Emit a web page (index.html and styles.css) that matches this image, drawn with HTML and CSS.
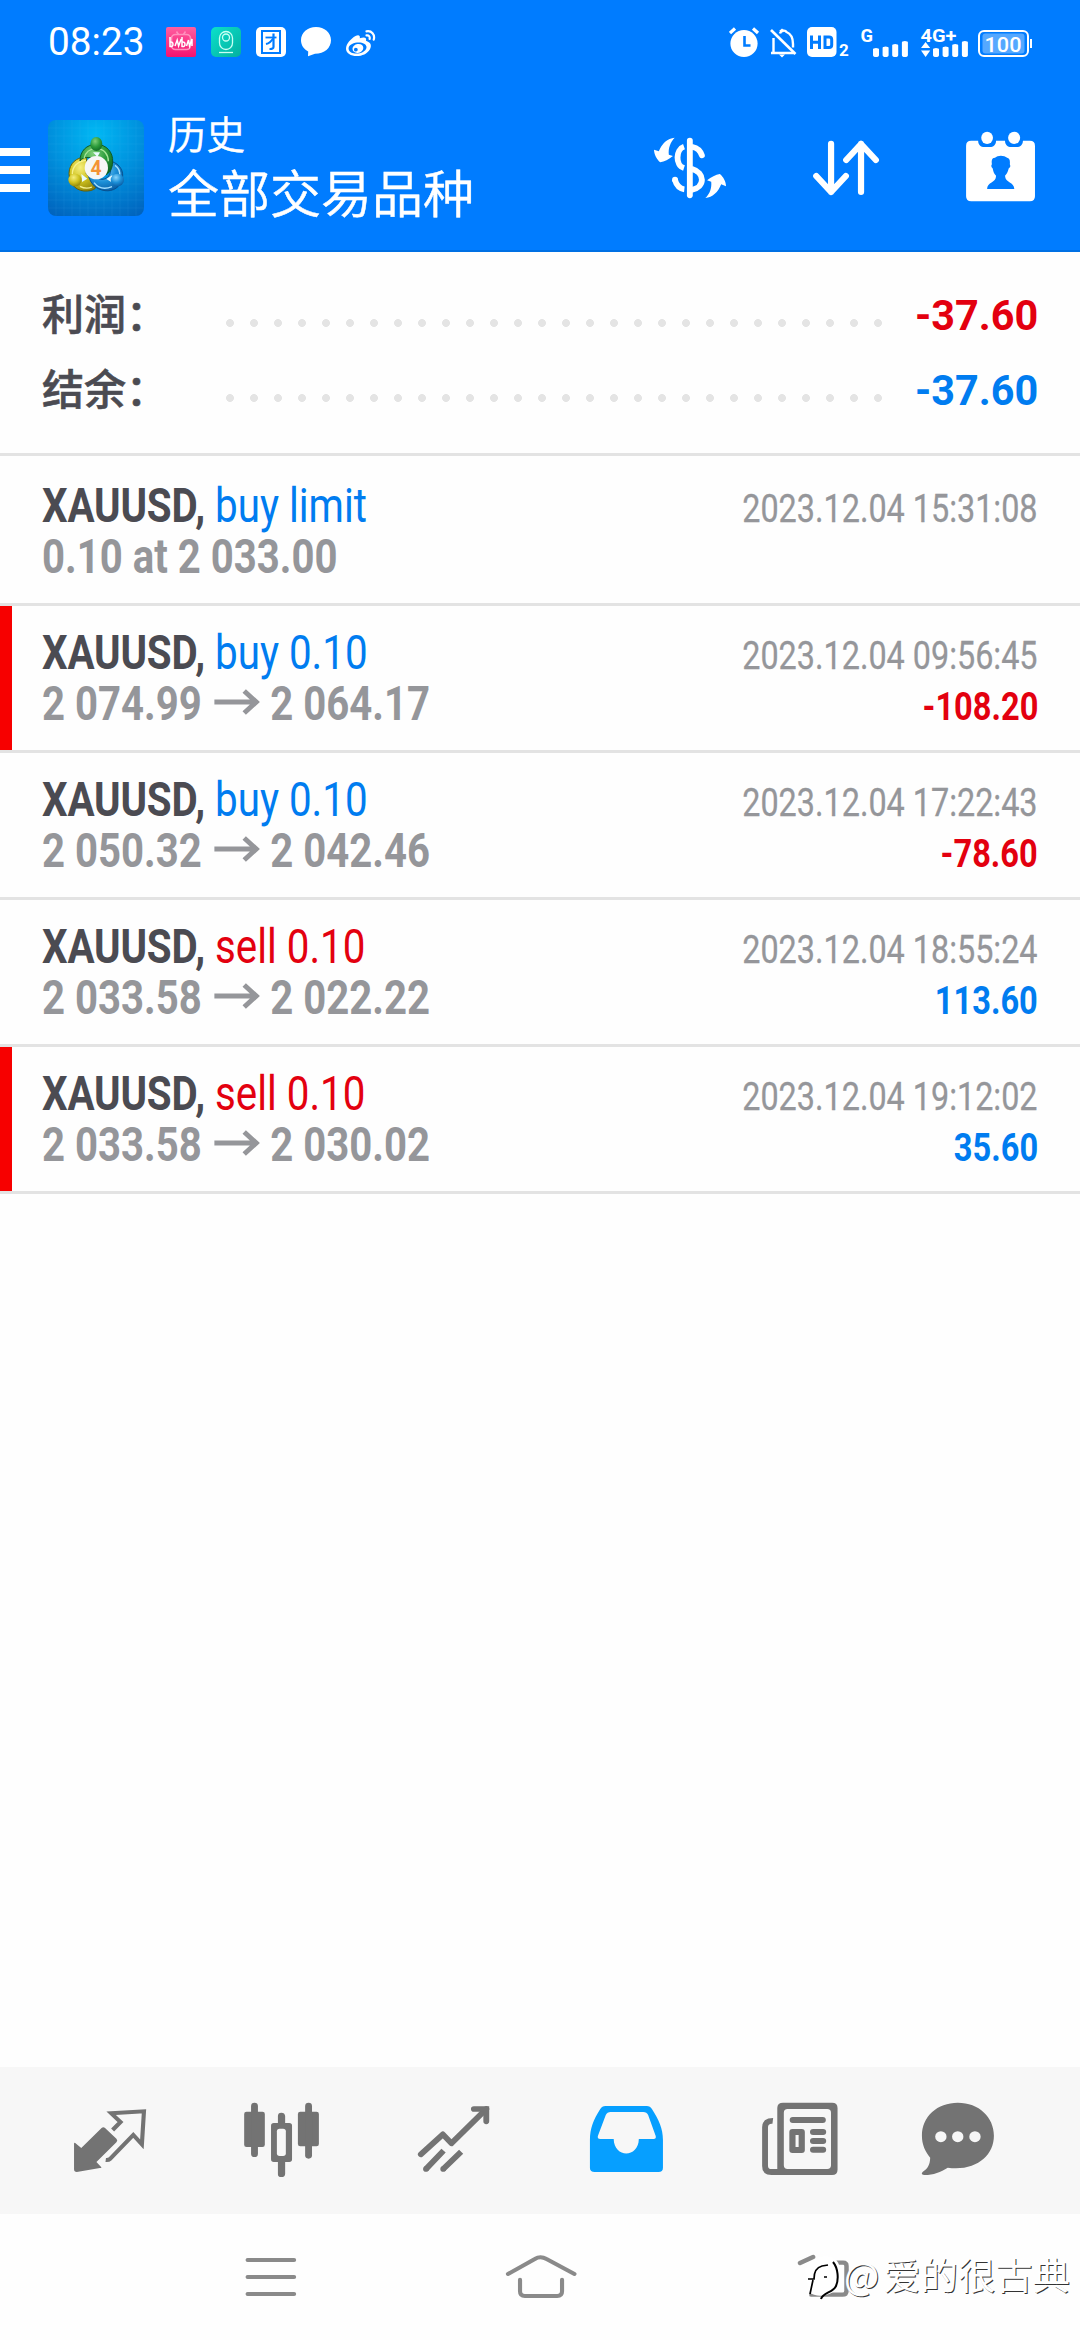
FILE: index.html
```html
<!DOCTYPE html>
<html lang="zh-CN">
<head>
<meta charset="utf-8">
<title>历史</title>
<link rel="stylesheet" href="styles.css">
</head>
<body>
<div class="screen">
  <header class="header">
    <div class="status">
      <div class="clock"><span>08:23</span></div>
      <div class="status-left">
        <svg width="30" height="30" viewBox="0 0 30 30"><defs><linearGradient id="pink" x1="0" y1="0" x2="0" y2="1"><stop offset="0" stop-color="#ff5fa0"/><stop offset="1" stop-color="#f5116f"/></linearGradient></defs><rect width="30" height="30" rx="2" fill="url(#pink)"/><g fill="none" stroke="#ff8fbd" stroke-width="1.600"><rect x="5.500" y="7.500" width="19" height="15" rx="4"/><path d="M10.500 4.500l2 3M19.500 4.500l-2 3"/></g><path d="M4 10v9.500q3 .6 3-2.200T4 15M9 19l2.200-6 1.400 6 2.600-7M16 10v9.500q3 .6 3-2.200T16 15M20.500 19l2-6 1 6 2.500-7v7" fill="none" stroke="#fff" stroke-width="1.500"/></svg>
        <svg width="30" height="30" viewBox="0 0 30 30"><defs><linearGradient id="teal" x1="0" y1="0" x2="1" y2="1"><stop offset="0" stop-color="#0be0cb"/><stop offset="1" stop-color="#04b09f"/></linearGradient></defs><rect width="30" height="30" rx="5" fill="url(#teal)"/><g fill="none" stroke="#c9fff4" stroke-width="1.300"><rect x="8.500" y="4.500" width="13" height="18" rx="6.500"/><circle cx="15" cy="10.500" r="3.500"/><path d="M8 25.500h14"/></g></svg>
        <svg width="30" height="30" viewBox="0 0 30 30"><rect width="30" height="30" rx="5" fill="#fff"/><g fill="none" stroke="#007cff"><rect x="6" y="4" width="18" height="22" stroke-width="2"/><path d="M9.500 10.500h11" stroke-width="1.800"/><path d="M17.500 6.500V20q0 2.200-4 2" stroke-width="2.200"/><path d="M17 11.500q-2.500 4.500-7 5.500" stroke-width="1.800"/></g></svg>
        <svg width="30" height="30" viewBox="0 0 30 30"><path d="M15 0C6.500 0 0 5.700 0 13.300c0 5 3 9 7.200 11.300L7 29.300l7-2.500C23.500 26.800 30 21 30 13.300S23.500 0 15 0z" fill="#fff"/></svg>
        <svg width="30" height="30" viewBox="0 0 30 30"><path fill="#fff" fill-rule="evenodd" d="M9.500 9c2.600-1.400 5-1 4.300 2.300 4-1.500 7.200-1.300 6.200 2.400 4.500 1.500 6.300 4.500 3.800 8.700-2.600 4.200-7.600 6.600-13 6.600C4.800 29 0 26.200 0 21.700 0 17 4.900 11.500 9.500 9zM11 15.500c-5 .5-8.700 3.200-8.400 6.400.4 3.200 4.600 5.100 9.500 4.600 5-.5 8.700-3.500 8.400-6.700-.3-3-4.600-4.900-9.500-4.300z"/><path fill="#fff" fill-rule="evenodd" d="M11.500 17c3.300-.5 5.800 1 5.800 3.700s-2.500 5-5.500 5.200c-3 .2-5.300-1.400-5.300-3.800 0-2.500 2.200-4.700 5-5.100zM9.800 20.700a1.900 1.900 0 1 0 .1 3.800 1.900 1.900 0 0 0-.1-3.800z"/><path d="M20.500 4.300c5-1 8.800 3.200 7.200 8.400M20.500 8.400c2.200-.4 3.700 1.200 3.100 3.500" fill="none" stroke="#fff" stroke-width="2.200" stroke-linecap="round"/></svg>
      </div>
      <div class="status-right">
        <svg width="310" height="36" viewBox="729 24 310 36">
          <g fill="#fff">
            <circle cx="744" cy="43.500" r="13.600"/>
            <path d="M730 33l5-4.500M758 33l-5-4.500" stroke="#fff" stroke-width="3.200"/>
            <path d="M744.500 36v9.500h6" fill="none" stroke="#007cff" stroke-width="2.600"/>
            <path d="M773.500 38v14M771 53h23M780 33.500c1-3.500 5.500-3.500 6.500-1.500 5 2 6.500 6 6.500 12v3.500" fill="none" stroke="#fff" stroke-width="2.400"/>
            <path d="M771 30l24.500 24" stroke="#fff" stroke-width="2.600"/>
            <path d="M779 31l3-2.500 3 2.500zM779 54.500h6l-3 3z"/>
            <rect x="807" y="27" width="29.500" height="30" rx="5"/>
            <path d="M811.500 35.500v13.500M819.500 35.500v13.500M812 42.300h7M825 37v10.500h4q2.700 0 2.700-2.500v-5.500q0-2.500-2.700-2.500z" fill="none" stroke="#007cff" stroke-width="3"/>
            <path d="M873 49.500q0-1.500 3-1.500t3 1.500V55q0 2-3 2t-3-2zM882.600 48q0-1.500 3-1.500t3 1.500v7q0 2-3 2t-3-2zM892.200 45.500q0-1.500 3-1.500t3 1.500V55q0 2-3 2t-3-2zM901.900 42.500q0-1.500 3-1.500t3 1.500V55q0 2-3 2t-3-2z"/>
            <path d="M933 49.500q0-1.500 3-1.500t3 1.500V55q0 2-3 2t-3-2zM942.600 48q0-1.500 3-1.500t3 1.500v7q0 2-3 2t-3-2zM952.200 45.500q0-1.500 3-1.500t3 1.500V55q0 2-3 2t-3-2zM961.900 42.500q0-1.500 3-1.500t3 1.500V55q0 2-3 2t-3-2z"/>
            <path d="M921 48l4.600-6 4.600 6zM921 50.500h9.200l-4.600 6.500z"/>
            <rect x="979" y="31" width="49" height="25" rx="5" fill="none" stroke="#fff" stroke-width="2"/>
            <rect x="982.500" y="33.500" width="42" height="20" rx="3" fill="#55a8ff"/>
            <rect x="1030" y="39" width="2" height="9"/>
            <text class="st" x="839" y="56" font-size="17">2</text>
            <text class="st" x="860.500" y="41.500" font-size="19" textLength="12.500" lengthAdjust="spacingAndGlyphs">G</text>
            <text class="st" x="920.500" y="41.500" font-size="19" textLength="36" lengthAdjust="spacingAndGlyphs">4G+</text>
            <text class="st thin" x="984.500" y="51.500" font-size="21" textLength="37" lengthAdjust="spacingAndGlyphs">100</text>
          </g>
        </svg>
      </div>
    </div>
    <div class="appbar">
      <div class="burger"><i></i><i></i><i></i></div>
      <svg class="logo" viewBox="54 60 288 288">
        <defs>
          <radialGradient id="sky" cx=".5" cy=".15" r=".95"><stop offset="0" stop-color="#00b8f4"/><stop offset=".5" stop-color="#0090dd"/><stop offset="1" stop-color="#0063bd"/></radialGradient>
          <radialGradient id="gr" cx=".4" cy=".3" r=".8"><stop offset="0" stop-color="#7fd07b"/><stop offset=".5" stop-color="#2c9c3c"/><stop offset="1" stop-color="#0b6020"/></radialGradient>
          <radialGradient id="ye" cx=".4" cy=".3" r=".8"><stop offset="0" stop-color="#f5ee7c"/><stop offset=".5" stop-color="#cfc21f"/><stop offset="1" stop-color="#847a08"/></radialGradient>
          <radialGradient id="bl" cx=".4" cy=".3" r=".8"><stop offset="0" stop-color="#8ad4fb"/><stop offset=".5" stop-color="#1c90d8"/><stop offset="1" stop-color="#07539a"/></radialGradient>
        </defs>
        <rect x="54" y="60" width="288" height="288" rx="24" fill="url(#sky)"/>
        <path d="M78 60v288M102 60v288M126 60v288M150 60v288M174 60v288M198 60v288M222 60v288M246 60v288M270 60v288M294 60v288M318 60v288M54 84h288M54 108h288M54 132h288M54 156h288M54 180h288M54 204h288M54 228h288M54 252h288M54 276h288M54 300h288M54 324h288" stroke="#5fd0ff" stroke-opacity=".13" stroke-width="2"/>
        <path d="M170 172c-30-2-52 18-53 48 0 35 25 56 56 53 14-1 23-6 28-14l-32-38z" fill="url(#ye)" stroke="#675f05" stroke-width="3"/>
        <path d="M168 181c-24 2-41 18-41 42M150 259q18 10 36 2" fill="none" stroke="#f6f191" stroke-width="4"/>
        <path d="M244 184c26 8 38 30 33 52-6 26-28 39-52 36-26-4-41-18-49-42l40 8c18 0 28-16 26-34z" fill="url(#bl)" stroke="#07508e" stroke-width="3"/>
        <path d="M255 196c12 8 16 20 14 34M192 248c14 18 34 20 54 12" fill="none" stroke="#a5e0ff" stroke-width="4"/>
        <path d="M150 183c0-30 20-50 49-50 30 0 51 24 49 53-1 20-8 32-20 38l-30-42c-10-12-32-12-44-4z" fill="url(#gr)" stroke="#0d5b2a" stroke-width="3"/>
        <path d="M162 176c4-18 15-30 37-30 24 0 36 18 36 38" fill="none" stroke="#a7e59a" stroke-width="4"/>
        <path d="M189 157h21l-8 14zM154 222l18 14-16 10zM229 237l18-12-2 22z" fill="#e9fbff"/>
        <ellipse cx="199" cy="132" rx="18" ry="21" fill="url(#gr)"/>
        <ellipse cx="135" cy="240" rx="20" ry="19" fill="url(#ye)"/>
        <ellipse cx="262" cy="240" rx="20" ry="19" fill="url(#bl)"/>
        <circle cx="199" cy="203" r="35" fill="#f6f6f6"/>
        <text class="logo-no" x="198" y="224" text-anchor="middle">4</text>
      </svg>
      <div class="titles">
        <div class="t1">历史</div>
        <div class="t2">全部交易品种</div>
      </div>
      <div class="actions">
        <svg viewBox="209 252 450 504" preserveAspectRatio="none">
          <g fill="none" stroke="#fff" stroke-width="17">
            <path d="M418 440c-24 8-26 56 0 64M391 538q8 28 28 30"/>
            <path d="M443 441q20 4 27 25" stroke-linecap="round"/>
            <path d="M440 506c40 12 40 56 0 64"/>
            <path d="M435 422v164" stroke-linecap="round"/>
          </g>
          <circle cx="392" cy="539" r="8.500" fill="#fff"/>
          <path fill="#fff" d="M391 413C370 415 354 430 345 454L331 449C331 463 339 478 349 487C361 485 374 478 386 468L374 464C372 445 378 427 391 413zM480 594C501 592 517 577 526 553L540 559C540 545 532 530 522 522C510 524 497 531 485 541L497 545C499 564 493 581 480 594z"/>
        </svg>
        <svg viewBox="659 252 450 504" preserveAspectRatio="none"><path d="M845 431v145M802 528l43 48 43-48M932 576V431M889 480l43-48 43 48" fill="none" stroke="#fff" stroke-width="18" stroke-linecap="round" stroke-linejoin="round"/></svg>
        <svg viewBox="1109 252 450 504" preserveAspectRatio="none"><path fill="#fff" fill-rule="evenodd" d="M1252 422h20c0 12 8 19 18 19h16c10 0 18-7 18-19h26c0 12 8 19 18 19h16c10 0 18-7 18-19h20q15 0 15 15v152q0 15-15 15h-170q-15 0-15-15V437q0-15 15-15zM1298 567h79c0-22-26-18-27-40 8-7 8-14 11-22 5-3 5-8 3-12 1-14-1-18-8-20-8-8-28-8-35 0-9 0-11 8-9 20-3 4-2 9 2 12 2 8 3 16 10 22 0 22-26 18-26 40z"/><ellipse cx="1298" cy="413.500" rx="17" ry="18.500" fill="#fff"/><ellipse cx="1376.500" cy="413.500" rx="17.500" ry="18.500" fill="#fff"/></svg>
      </div>
    </div>
  </header>

  <section class="summary">
    <div class="sum-row"><span class="label">利润：</span><i class="dots"></i><span class="value red">-37.60</span></div>
    <div class="sum-row"><span class="label">结余：</span><i class="dots"></i><span class="value blue">-37.60</span></div>
  </section>

  <main class="list">
    <article class="deal first">
      <div class="line"><span class="name"><b>XAUUSD,</b> <span class="blue">buy limit</span></span><span class="date">2023.12.04 15:31:08</span></div>
      <div class="line"><span class="price">0.10 at 2 033.00</span></div>
    </article>
    <article class="deal mark">
      <div class="line"><span class="name"><b>XAUUSD,</b> <span class="blue">buy 0.10</span></span><span class="date">2023.12.04 09:56:45</span></div>
      <div class="line"><span class="price">2 074.99<svg class="arrow" viewBox="0 0 46 26" preserveAspectRatio="none"><path d="M0 13h41M30 2l12 11-12 11"/></svg>2 064.17</span><span class="profit red">-108.20</span></div>
    </article>
    <article class="deal">
      <div class="line"><span class="name"><b>XAUUSD,</b> <span class="blue">buy 0.10</span></span><span class="date">2023.12.04 17:22:43</span></div>
      <div class="line"><span class="price">2 050.32<svg class="arrow" viewBox="0 0 46 26" preserveAspectRatio="none"><path d="M0 13h41M30 2l12 11-12 11"/></svg>2 042.46</span><span class="profit red">-78.60</span></div>
    </article>
    <article class="deal">
      <div class="line"><span class="name"><b>XAUUSD,</b> <span class="red">sell 0.10</span></span><span class="date">2023.12.04 18:55:24</span></div>
      <div class="line"><span class="price">2 033.58<svg class="arrow" viewBox="0 0 46 26" preserveAspectRatio="none"><path d="M0 13h41M30 2l12 11-12 11"/></svg>2 022.22</span><span class="profit blue">113.60</span></div>
    </article>
    <article class="deal mark">
      <div class="line"><span class="name"><b>XAUUSD,</b> <span class="red">sell 0.10</span></span><span class="date">2023.12.04 19:12:02</span></div>
      <div class="line"><span class="price">2 033.58<svg class="arrow" viewBox="0 0 46 26" preserveAspectRatio="none"><path d="M0 13h41M30 2l12 11-12 11"/></svg>2 030.02</span><span class="profit blue">35.60</span></div>
    </article>
  </main>

  <nav class="tabs">
    <svg viewBox="0 51 522.670 441" preserveAspectRatio="none"><path d="M215 281q0-5 6 0l15 13 59-60q5-5 10 0l33 32q5 5 0 11l-58 59 13 14q4 4-3 4l-67 12q-8 0-8-8z" fill="#737373"/><path d="M327 240l23-24-27-26 95-6-6 99-25-28-68 72q-4 4-12 3" fill="none" stroke="#737373" stroke-width="12"/></svg>
    <svg viewBox="522.670 51 522.670 441" preserveAspectRatio="none"><g fill="#737373"><rect x="709" y="185" width="60" height="106" rx="7"/><rect x="729" y="158" width="20" height="163" rx="10"/><rect x="865" y="185" width="61" height="104" rx="7"/><rect x="886" y="158" width="20" height="168" rx="10"/><path d="M807 219v-21q0-10 10-10t11 10v21h12q8 0 8 8v101q0 8-8 8h-12v35q0 10-11 10t-10-10v-35h-12q-8 0-8-8V227q0-8 8-8z"/></g><rect x="804" y="236" width="26" height="82" rx="8" fill="#f7f7f7"/></svg>
    <svg viewBox="1045.330 51 522.670 441" preserveAspectRatio="none"><g fill="none" stroke="#737373" stroke-width="17"><path d="M1222 313l64-60 25 27 101-103" stroke-linecap="round" stroke-linejoin="round"/><path d="M1376 177h36v37" stroke-width="17" stroke-linecap="round"/><path d="M1288 302l-51 55M1339 305l-52 52"/></g><g fill="#737373"><circle cx="1237" cy="357" r="8.500"/><circle cx="1287" cy="357" r="8.500"/></g></svg>
    <svg viewBox="0 51 522.670 441" preserveAspectRatio="none"><path fill="#069fff" fill-rule="evenodd" d="M190 168h120q10 0 15 9c20 32 32 60 32 92v84q0 13-13 13H159q-14 0-14-13v-84c0-32 10-60 30-92q5-9 15-9zM205 186q-10 0-14 9l-23 63q-2 9 7 9h39c1 58 72 58 73 0h43q8 0 6-9l-22-63q-4-9-14-9z"/></svg>
    <svg viewBox="522.670 51 522.670 441" preserveAspectRatio="none"><path fill="#737373" fill-rule="evenodd" d="M706 158h142q16 0 16 16v185q0 16-16 16H672q-27 0-27-27V232q0-28 32-28l-2 17q-13-1-13 11v115q0 10 10 10h17V174q0-16 17-16zM719 177q-11 0-11 11v158q0 11 11 11h115q11 0 11-11V188q0-11-11-11z"/><g fill="none" stroke="#737373" stroke-width="18" stroke-linecap="round" stroke-linejoin="round"><path d="M734 210h87M793 246h29M793 273h29M793 299h29"/><path d="M733 246h27v54h-27z"/></g></svg>
    <svg viewBox="1045.330 51 522.670 441" preserveAspectRatio="none"><path fill="#737373" d="M1213 158c62 0 105 44 105 99 0 60-52 107-134 96-20 13-42 22-67 22q-13-1-6-9c16-12 21-22 22-43-15-19-24-40-24-66 0-58 45-99 104-99z"/><g fill="#f7f7f7"><circle cx="1164" cy="260" r="16.500"/><circle cx="1213" cy="260" r="16.500"/><circle cx="1263" cy="260" r="16.500"/></g></svg>
  </nav>

  <div class="sysnav">
    <svg viewBox="0 492 1045.330 378" preserveAspectRatio="none"><path d="M719 630h135M719 681h135M719 732h135"/></svg>
    <svg viewBox="1045.330 492 1045.330 378" preserveAspectRatio="none"><path d="M1475 672l78-45q16-11 34 0l81 45M1510 689v35q0 14 14 14h94q14 0 14-14v-35"/></svg>
    <svg viewBox="522.670 492 1045.330 378" preserveAspectRatio="none"><path d="M755 639l38-18M845 638h35q10 0 10 10v74q0 12-12 12h-90" stroke-width="13"/></svg>
  </div>

  <div class="watermark">
    <svg width="42" height="52" viewBox="0 0 42 52"><path d="M3 18C10 6 24 2 33 8c8 6 6 24-2 33-8 5-18 5-24 0z" fill="#fff"/><path d="M31 11c5 6 6 17 3 24-3 7-13 6-15 13" fill="none" stroke="#000" stroke-width="2"/><path d="M6 28h6q0-11 8-13l6-1M11 29l-3 14M22 26h3" fill="none" stroke="#000" stroke-width="1.700"/></svg><span class="at">@</span><span>爱的很古典</span>
  </div>
</div>
</body>
</html>
```
FILE: styles.css
```css
* { box-sizing: border-box; }
body { margin: 0; background: #fefefe; font-family: Roboto, "Noto Sans CJK SC", sans-serif; }
.screen { position: relative; width: 1080px; height: 2340px; display: flex; flex-direction: column; background: #fefefe; overflow: hidden; }
svg { display: block; flex: none; }
.red { color: #e3000f; }
.blue { color: #007cf0; }

.header { height: 252px; background: #007cff; border-bottom: 2px solid #0070e4; color: #fff; }
.status { height: 84px; display: flex; align-items: center; }
.clock { width: 118px; margin-left: 48px; font-size: 39.500px; line-height: 84px; }
.clock span { display: inline-block; transform: scaleX(.98); transform-origin: left; }
.status-left { display: flex; gap: 15px; }
.status-right { margin-left: auto; margin-right: 41px; }
.st { font-family: Roboto, sans-serif; font-weight: 700; }
.st.thin { font-weight: 500; }

.appbar { height: 168px; display: flex; align-items: flex-start; }
.burger { width: 30px; margin-top: 64px; display: flex; flex-direction: column; gap: 10px; }
.burger i { height: 8px; background: #fff; }
.logo { width: 96px; height: 96px; margin: 36px 0 0 18px; }
.logo-no { font: 700 58px Roboto, sans-serif; fill: #f49335; }
.titles { margin: 19px 0 0 24px; font-weight: 350; font-family: "Noto Sans CJK SC", sans-serif; white-space: nowrap; -webkit-text-stroke: .5px #fff; }
.titles div { line-height: 59px; }
.t1 { font-size: 38.500px; }
.t2 { font-size: 51px; }
.actions { display: flex; margin-left: auto; margin-right: 3px; }
.actions svg { width: 155px; height: 168px; }

.summary { height: 204px; padding: 26px 42px 0; border-bottom: 3px solid #e3e3e3; }
.sum-row { height: 75px; display: flex; align-items: baseline; }
.label { width: 176px; font: 500 42px/60px "Noto Sans CJK SC", sans-serif; color: #4b4b52; -webkit-text-stroke: .6px #4b4b52; }
.dots { width: 672px; height: 8px; align-self: flex-start; margin-top: 41px; background: radial-gradient(circle at center, #e4e4e4 3.600px, transparent 4.300px) 0 0 / 24px 8px repeat-x; }
.value { margin-left: auto; font-weight: 700; font-size: 42px; line-height: 75px; transform: scaleX(.985); transform-origin: right; }

.list { flex: 1; }
.deal { height: 147px; padding: 21px 42px 0; border-bottom: 3px solid #e3e3e3; }
.deal.first { height: 150px; padding-top: 24px; }
.deal.mark { background: linear-gradient(#f70000, #f70000) 0 0 / 12px 100% no-repeat; background-clip: padding-box; }
.line { height: 51px; display: flex; justify-content: space-between; align-items: baseline; line-height: 51px; white-space: nowrap; }
.name, .price { font-size: 48px; transform: scaleX(.84); transform-origin: left; }
.name b { color: #4b4b52; letter-spacing: -.2px; }
.price { font-weight: 700; color: #95969a; transform: scaleX(.836); }
.date, .profit { font-size: 39.500px; transform: scaleX(.825); transform-origin: right; }
.date { color: #95969a; transform: scaleX(.819); -webkit-text-stroke: .3px #95969a; }
.profit { font-weight: 700; }
.arrow { display: inline-block; width: 55px; height: 26px; margin: 0 12px 0 15px; vertical-align: 5px; fill: none; stroke: #95969a; stroke-width: 5; }

.tabs { height: 147px; display: flex; background: #f7f7f7; }
.tabs svg { width: 180px; height: 147px; }
.sysnav { height: 126px; display: flex; }
.sysnav svg { width: 360px; height: 126px; fill: none; stroke: #8a8a8a; stroke-width: 12; stroke-linecap: round; }

.watermark { position: absolute; left: 802px; top: 2251px; display: flex; align-items: center; font: 37.300px/48px "Noto Sans CJK SC", sans-serif; color: #fff; text-shadow: 1px 1px 0 #333; white-space: nowrap; }
.watermark span { margin-top: -7px; }
.at { margin-right: 4px; }
```
